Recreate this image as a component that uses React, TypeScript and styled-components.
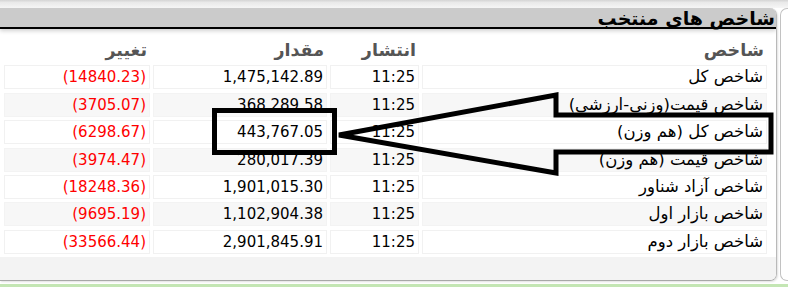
import React from 'react'
import styled, { createGlobalStyle } from 'styled-components'

const GlobalStyle = createGlobalStyle`
  html, body {
    margin: 0;
    padding: 0;
    background: #fff;
  }
  body {
    font-family: Tahoma, 'DejaVu Sans', sans-serif;
  }
`

interface IndexRow {
  name: string
  time: string
  value: string
  change: string
}

const rows: IndexRow[] = [
  { name: 'شاخص کل', time: '11:25', value: '1,475,142.89', change: '(14840.23)' },
  { name: 'شاخص قیمت(وزنی-ارزشی)', time: '11:25', value: '368,289.58', change: '(3705.07)' },
  { name: 'شاخص کل (هم وزن)', time: '11:25', value: '443,767.05', change: '(6298.67)' },
  { name: 'شاخص قیمت (هم وزن)', time: '11:25', value: '280,017.39', change: '(3974.47)' },
  { name: 'شاخص آزاد شناور', time: '11:25', value: '1,901,015.30', change: '(18248.36)' },
  { name: 'شاخص بازار اول', time: '11:25', value: '1,102,904.38', change: '(9695.19)' },
  { name: 'شاخص بازار دوم', time: '11:25', value: '2,901,845.91', change: '(33566.44)' },
]

const Page = styled.div`
  position: relative;
  width: 788px;
  height: 287px;
  overflow: hidden;
  display: flex;
  flex-direction: column;
  background: #fff;
`

const TopStrip = styled.div`
  height: 8px;
  background: linear-gradient(#d4d4d4, #e9e9e9 30%, #f6f6f6);
`

const Columns = styled.div`
  display: flex;
  height: 273px;
`

const Panel = styled.section`
  width: 776px;
  display: flex;
  flex-direction: column;
  border-right: 1px solid #b9b9b9;
  border-bottom: 1px solid #a8a8a8;
  border-radius: 0 7px 7px 0;
  overflow: hidden;
  box-shadow: 1px 1px 2px rgba(0, 0, 0, 0.12);
`

const SidePanel = styled.aside`
  flex: 1;
  margin-left: 3px;
  border: 1px solid #c2c2c2;
  border-right: none;
  border-radius: 7px 0 0 7px;
  background: #fff;
`

const TitleBar = styled.h2`
  position: relative;
  z-index: 1;
  margin: 0;
  height: 19px;
  padding-right: 1px;
  background: #cbcbcb;
  border-bottom: 2px solid #000;
  box-shadow: 0 2px 4px rgba(0, 0, 0, 0.18);
  direction: rtl;
  color: #000;
  font-size: 19px;
  font-weight: bold;
  line-height: 20px;
  white-space: nowrap;
`

const Body = styled.div`
  background: #fff;
  padding: 9px 9px 3px 3px;
`

const Grid = styled.div`
  direction: rtl;
  display: grid;
  grid-template-columns: 345px 89px 174px 146px;
  grid-auto-rows: 24px;
  row-gap: 3.4px;
  column-gap: 3px;
`

const HeadCell = styled.div`
  padding: 0 3px;
  color: #555;
  font-size: 17.5px;
  font-weight: bold;
  line-height: 24px;
  text-align: right;
  white-space: nowrap;
`

const Cell = styled.div<{ $shade: boolean; $num?: boolean; $neg?: boolean }>`
  padding: 0 3px;
  border: 1px solid ${p => (p.$shade ? '#f3f3f3' : '#f1f1f1')};
  background: ${p => (p.$shade ? '#f7f7f7' : '#ffffff')};
  color: ${p => (p.$neg ? '#ff0000' : '#000')};
  direction: ${p => (p.$num ? 'ltr' : 'rtl')};
  text-align: right;
  font-size: ${p => (p.$num ? '15px' : '16.5px')};
  line-height: 22px;
  white-space: nowrap;
  overflow: hidden;
`

const Footer = styled.div`
  flex: 1;
  background: #f3f3f3;
`

const GreenStrip = styled.div`
  margin-top: 3px;
  height: 3px;
  background: #c4e6b4;
`

const Overlay = styled.svg`
  position: absolute;
  top: 0;
  left: 0;
  pointer-events: none;
`

function App() {
  return (
    <>
      <GlobalStyle />
      <Page>
        <TopStrip />
        <Columns>
          <Panel>
            <TitleBar>شاخص های منتخب</TitleBar>
            <Body>
              <Grid>
                <HeadCell>شاخص</HeadCell>
                <HeadCell>انتشار</HeadCell>
                <HeadCell>مقدار</HeadCell>
                <HeadCell>تغییر</HeadCell>
                {rows.map((r, i) => {
                  const shade = i % 2 === 1
                  return (
                    <React.Fragment key={r.name}>
                      <Cell $shade={shade}>{r.name}</Cell>
                      <Cell $shade={shade} $num>
                        {r.time}
                      </Cell>
                      <Cell $shade={shade} $num>
                        {r.value}
                      </Cell>
                      <Cell $shade={shade} $num $neg>
                        {r.change}
                      </Cell>
                    </React.Fragment>
                  )
                })}
              </Grid>
            </Body>
            <Footer />
          </Panel>
          <SidePanel />
        </Columns>
        <GreenStrip />
        <Overlay width="788" height="287" viewBox="0 0 788 287">
          <rect x="214.5" y="110.5" width="120" height="42" fill="none" stroke="#000" strokeWidth="5" />
          <path
            d="M339 135 L556 95 L556 115 L771 115 L771 152 L556 152 L556 173 Z"
            fill="none"
            stroke="#000"
            strokeWidth="5"
            strokeLinejoin="miter"
          />
        </Overlay>
      </Page>
    </>
  )
}

export default App
